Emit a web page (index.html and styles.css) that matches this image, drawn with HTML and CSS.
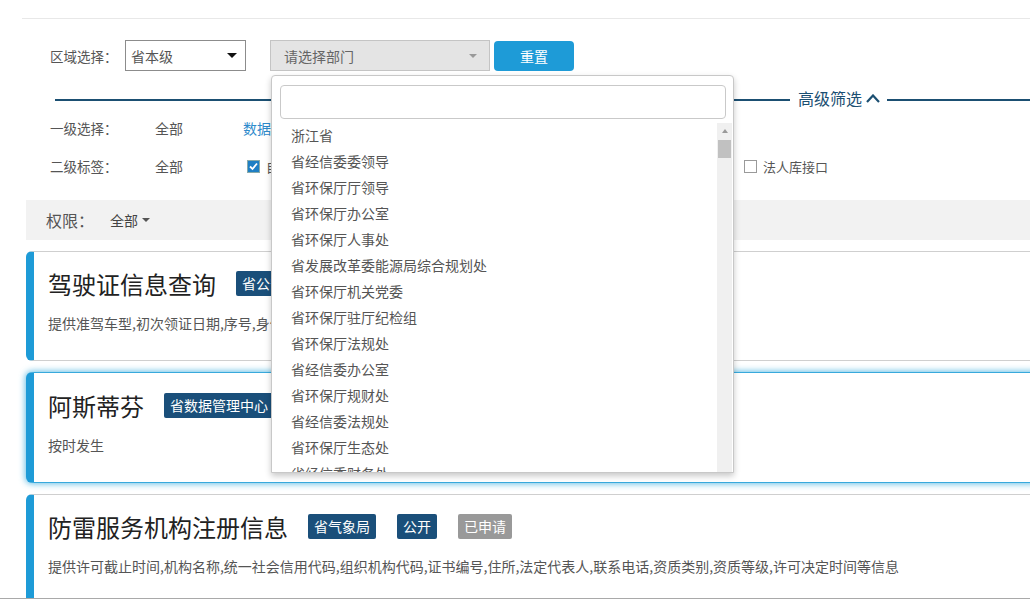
FILE: index.html
```html
<!DOCTYPE html>
<html lang="zh">
<head>
<meta charset="utf-8">
<link rel="stylesheet" href="styles.css">
</head>
<body>
<div class="frame">
  <div class="topline"></div>

  <div class="filter-row">
    <span class="lbl">区域选择：</span>
    <div class="sel region"><span>省本级</span><span class="caret-dark"></span></div>
    <div class="sel dept"><span>请选择部门</span><span class="caret-light"></span></div>
    <button class="btn-reset">重置</button>
  </div>

  <div class="divider">
    <span class="dline first"></span>
    <span class="dtext">高级筛选</span>
    <svg class="chev" width="16" height="14" viewBox="0 0 16 14"><polyline points="2,11 8,4.5 14,11" fill="none" stroke="#1b4f72" stroke-width="2.2"/><polyline points="4,8 8,3.5 12,8" fill="none" stroke="#1b4f72" stroke-width="1" opacity="0.5"/></svg>
    <span class="dline rest"></span>
  </div>

  <div class="opt-row r1">
    <span class="olbl">一级选择：</span>
    <span class="oall narrow">全部</span>
    <span class="olink">数据资源</span>
  </div>

  <div class="opt-row r2">
    <span class="olbl">二级标签：</span>
    <span class="oall">全部</span>
    <label class="chk-item"><span class="cb on"><svg width="11" height="11" viewBox="0 0 11 11"><rect x="0" y="0" width="11" height="11" fill="#1f7fc4"/><polyline points="2,5.5 4.5,8 9,2.5" fill="none" stroke="#fff" stroke-width="1.8"/></svg></span>自然人库接口</label>
    <label class="chk-item far"><span class="cb"></span>法人库接口</label>
  </div>

  <div class="perm-bar">
    <span class="perm-lbl">权限：</span>
    <span class="perm-val">全部<span class="caret-small"></span></span>
  </div>

  <div class="cards">
    <div class="card">
      <div class="card-head">
        <span class="card-title">驾驶证信息查询</span>
        <span class="tag">省公安厅</span>
      </div>
      <div class="card-desc">提供准驾车型,初次领证日期,序号,身份证号码,姓名,驾驶证状态等信息</div>
    </div>
    <div class="card active">
      <div class="card-head">
        <span class="card-title">阿斯蒂芬</span>
        <span class="tag">省数据管理中心</span>
      </div>
      <div class="card-desc">按时发生</div>
    </div>
    <div class="card">
      <div class="card-head">
        <span class="card-title">防雷服务机构注册信息</span>
        <span class="tag">省气象局</span>
        <span class="tag">公开</span>
        <span class="tag gray">已申请</span>
      </div>
      <div class="card-desc">提供许可截止时间,机构名称,统一社会信用代码,组织机构代码,证书编号,住所,法定代表人,联系电话,资质类别,资质等级,许可决定时间等信息</div>
    </div>
  </div>

  <div class="dropdown">
    <div class="dd-search"><input type="text"></div>
    <div class="dd-body">
      <ul class="dd-list">
        <li>浙江省</li>
        <li>省经信委委领导</li>
        <li>省环保厅厅领导</li>
        <li>省环保厅办公室</li>
        <li>省环保厅人事处</li>
        <li>省发展改革委能源局综合规划处</li>
        <li>省环保厅机关党委</li>
        <li>省环保厅驻厅纪检组</li>
        <li>省环保厅法规处</li>
        <li>省经信委办公室</li>
        <li>省环保厅规财处</li>
        <li>省经信委法规处</li>
        <li>省环保厅生态处</li>
        <li>省经信委财务处</li>
      </ul>
      <div class="dd-scroll">
        <span class="sc-up"></span>
        <span class="sc-thumb"></span>
      </div>
    </div>
  </div>
</div>
</body>
</html>
```

FILE: styles.css
```css
html, body {
  margin: 0;
  padding: 0;
  overflow: hidden;
  background: #fff;
}
body {
  font-family: "Noto Sans CJK SC", "Noto Sans", sans-serif;
  color: #555;
  font-size: 13px;
}
.frame {
  position: relative;
  height: 598px;
  border-bottom: 1px solid #a9a9a9;
  overflow: hidden;
}
.topline {
  margin-left: 22px;
  height: 18px;
  border-bottom: 1px solid #e8e8e8;
}

/* filter row */
.filter-row {
  display: flex;
  align-items: center;
  margin-top: 21px;
  height: 31px;
  padding-left: 50px;
}
.lbl {
  font-size: 13.5px;
  color: #555;
  width: 75px;
}
.sel {
  box-sizing: border-box;
  height: 31px;
  display: flex;
  align-items: center;
  justify-content: space-between;
  font-size: 14px;
}
.region {
  width: 121px;
  border: 1px solid #8c8c8c;
  padding: 0 8px 0 5px;
  color: #555;
}
.dept {
  width: 220px;
  margin-left: 24px;
  border: 1px solid #c4c4c4;
  background: #e4e4e4;
  padding: 0 12px 0 13px;
  color: #666;
}
.caret-dark {
  width: 0; height: 0;
  border-left: 5px solid transparent;
  border-right: 5px solid transparent;
  border-top: 5px solid #111;
}
.caret-light {
  width: 0; height: 0;
  border-left: 4px solid transparent;
  border-right: 4px solid transparent;
  border-top: 4px solid #999;
}
.btn-reset {
  margin-left: 4px;
  width: 80px;
  height: 30px;
  border: none;
  border-radius: 4px;
  background: #1e9bd7;
  color: #fff;
  font-family: inherit;
  font-size: 14px;
  padding: 0;
}

/* divider */
.divider {
  display: flex;
  align-items: center;
  margin-top: 19px;
  height: 20px;
  padding-left: 55px;
}
.dline {
  height: 2px;
  background: #1b4f72;
}
.dline.first { width: 735px; }
.dline.rest { flex: 1; margin-left: 6px; }
.dtext {
  margin-left: 8px;
  margin-right: 3px;
  font-size: 16px;
  line-height: 20px;
  color: #1b4f72;
  position: relative;
  top: -2px;
}
.chev { display: block; position: relative; top: -2px; }

/* option rows */
.opt-row {
  display: flex;
  align-items: center;
  height: 20px;
  padding-left: 50px;
  font-size: 13.5px;
}
.r1 { margin-top: 8px; }
.r2 { margin-top: 18px; }
.olbl { width: 105px; color: #555; }
.oall { width: 92px; color: #555; font-size: 14px; }
.oall.narrow { width: 88px; }
.olink { color: #2e8bcc; font-size: 14px; }
.chk-item {
  display: flex;
  align-items: center;
  color: #555;
  font-size: 13px;
}
.chk-item.far { margin-left: 400px; }
.cb {
  box-sizing: border-box;
  width: 13px;
  height: 13px;
  border: 1px solid #9a9a9a;
  background: #fff;
  margin-right: 6px;
  display: flex;
  align-items: center;
  justify-content: center;
}
.cb.on { border-color: #8aa; }
.cb svg { display: block; }

/* permission bar */
.perm-bar {
  margin-top: 24px;
  margin-left: 26px;
  height: 40px;
  background: #f2f2f2;
  display: flex;
  align-items: center;
  padding-left: 20px;
}
.perm-lbl {
  font-size: 16px;
  color: #555;
  width: 64px;
}
.perm-val {
  font-size: 14px;
  color: #444;
  display: flex;
  align-items: center;
}
.caret-small {
  margin-left: 4px;
  width: 0; height: 0;
  border-left: 4px solid transparent;
  border-right: 4px solid transparent;
  border-top: 4px solid #555;
}

/* cards */
.cards {
  margin-top: 11px;
  margin-left: 26px;
  margin-right: -12px;
  display: flex;
  flex-direction: column;
  gap: 11px;
}
.card {
  box-sizing: border-box;
  height: 110px;
  border: 1px solid #cfcfcf;
  border-left: 8px solid #1e9bd7;
  border-radius: 6px 0 0 6px;
  background: #fff;
  padding: 15px 0 0 14px;
}
.card.active {
  border-color: #38a9dc;
  border-left-color: #1e9bd7;
  box-shadow: 0 0 6px 1px rgba(56, 172, 222, 0.75);
  height: 111px;
  padding-top: 16px;
}
.card-head {
  display: flex;
  align-items: center;
  height: 32px;
}
.card-title {
  font-size: 24px;
  color: #222;
  margin-right: 20px;
}
.tag {
  display: inline-flex;
  align-items: center;
  height: 25px;
  padding: 0 6px;
  background: #1a4f7a;
  color: #fff;
  font-size: 14px;
  border-radius: 2px;
  margin-right: 21px;
}
.tag.gray { background: #999; }
.card-desc {
  margin-top: 14px;
  font-size: 14px;
  line-height: 20px;
  color: #555;
  white-space: nowrap;
}

/* dropdown overlay */
.dropdown {
  position: absolute;
  left: 271px;
  top: 75px;
  width: 463px;
  height: 398px;
  box-sizing: border-box;
  background: #fff;
  border: 1px solid #c8c8c8;
  border-radius: 4px 4px 0 0;
  box-shadow: 0 3px 6px rgba(0, 0, 0, 0.22);
  display: flex;
  flex-direction: column;
  overflow: hidden;
}
.dd-search {
  padding: 9px 7px 0 8px;
}
.dd-search input {
  box-sizing: border-box;
  display: block;
  width: 100%;
  height: 34px;
  border: 1px solid #c9c9c9;
  border-radius: 4px;
  outline: none;
}
.dd-body {
  flex: 1;
  display: flex;
  margin-top: 4px;
  overflow: hidden;
}
.dd-list {
  flex: 1;
  list-style: none;
  margin: 0;
  padding: 0;
}
.dd-list li {
  height: 26px;
  line-height: 25px;
  padding-left: 19px;
  font-size: 14px;
  color: #555;
}
.dd-scroll {
  width: 15px;
  margin-right: 1px;
  background: #f0f0f0;
  display: flex;
  flex-direction: column;
  align-items: center;
}
.sc-up {
  margin-top: 6px;
  width: 0; height: 0;
  border-left: 3px solid transparent;
  border-right: 3px solid transparent;
  border-bottom: 4px solid #999;
}
.sc-thumb {
  margin-top: 7px;
  width: 13px;
  height: 18px;
  background: #c1c1c1;
}
```
